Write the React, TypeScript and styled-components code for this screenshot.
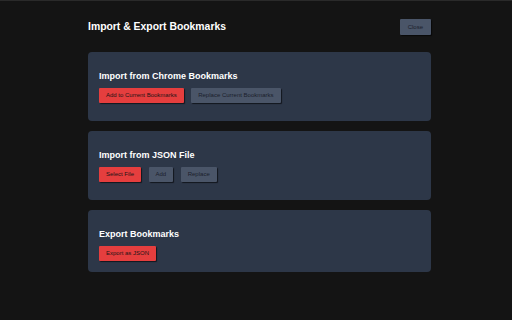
import React from "react";
import styled, { createGlobalStyle } from "styled-components";

const GlobalStyle = createGlobalStyle`
  html, body {
    margin: 0;
    padding: 0;
    background: #141414;
    font-family: "Liberation Sans", Arial, sans-serif;
  }
  body {
    border-top: 1px solid #2a2a2a;
    min-height: 319px;
  }
`;

const Page = styled.div`
  width: 343px;
  margin-left: 88px;
  padding-top: 18px;
  display: flex;
  flex-direction: column;
`;

const Header = styled.header`
  display: flex;
  align-items: center;
  justify-content: space-between;
  margin-bottom: 17px;
`;

const Title = styled.h1`
  margin: 0;
  font-size: 10.4px;
  font-weight: 700;
  color: #ffffff;
  line-height: 16px;
`;

const Sections = styled.div`
  display: flex;
  flex-direction: column;
  gap: 10.5px;
`;

const Card = styled.section<{ $tall?: boolean }>`
  background: #2d3748;
  border-radius: 4px;
  padding: 19px 11px ${({ $tall }) => ($tall ? "17.5px" : "11px")};
`;

const Heading = styled.h2`
  margin: 0 0 6px;
  font-size: 9px;
  font-weight: 700;
  line-height: 11px;
  color: #ffffff;
`;

const ButtonRow = styled.div`
  display: flex;
  gap: 7.5px;
`;

const Button = styled.button<{ $variant?: "primary" | "secondary" }>`
  height: 15px;
  padding: 0 7px;
  border: none;
  border-radius: 1px;
  font-family: "Liberation Sans", Arial, sans-serif;
  font-size: 6px;
  line-height: 15px;
  color: ${({ $variant }) => ($variant === "primary" ? "#1a1416" : "#1a202c")};
  background: ${({ $variant }) => ($variant === "primary" ? "#e53e3e" : "#4a5568")};
  box-shadow: 1px 1px 1px rgba(0, 0, 0, 0.6);
  cursor: pointer;
`;

const CloseButton = styled(Button)`
  height: 16px;
  padding: 0 8px;
  line-height: 16px;
`;

export default function App() {
  return (
    <>
      <GlobalStyle />
      <Page>
        <Header>
          <Title>Import &amp; Export Bookmarks</Title>
          <CloseButton $variant="secondary">Close</CloseButton>
        </Header>
        <Sections>
          <Card $tall>
            <Heading>Import from Chrome Bookmarks</Heading>
            <ButtonRow>
              <Button $variant="primary">Add to Current Bookmarks</Button>
              <Button $variant="secondary">Replace Current Bookmarks</Button>
            </ButtonRow>
          </Card>
          <Card $tall>
            <Heading>Import from JSON File</Heading>
            <ButtonRow>
              <Button $variant="primary">Select File</Button>
              <Button $variant="secondary">Add</Button>
              <Button $variant="secondary">Replace</Button>
            </ButtonRow>
          </Card>
          <Card>
            <Heading>Export Bookmarks</Heading>
            <ButtonRow>
              <Button $variant="primary">Export as JSON</Button>
            </ButtonRow>
          </Card>
        </Sections>
      </Page>
    </>
  );
}
